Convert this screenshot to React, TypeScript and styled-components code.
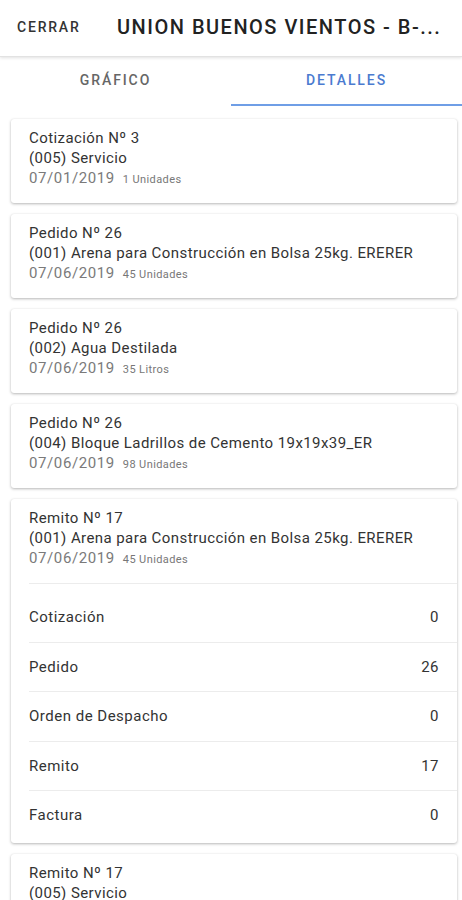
import React from "react";
import styled, { createGlobalStyle } from "styled-components";

const Global = createGlobalStyle`
  html, body { margin: 0; padding: 0; background: #fff; }
  body { font-family: Roboto, "Noto Sans", Arial, sans-serif; -webkit-font-smoothing: antialiased; }
  * { box-sizing: border-box; }
`;

const Page = styled.div`
  width: 462px;
  min-height: 900px;
  background: #fff;
  overflow: hidden;
`;

const Header = styled.header`
  height: 56px;
  display: flex;
  align-items: center;
  padding-left: 17px;
  padding-bottom: 3px;
  background: #fff;
  box-shadow: 0 1px 0 #e2e2e2, 0 2px 3px rgba(0, 0, 0, 0.12);
  position: relative;
  z-index: 1;
`;

const CloseButton = styled.span`
  font-size: 14px;
  font-weight: 500;
  letter-spacing: 1.8px;
  color: #333;
  width: 100px;
`;

const Title = styled.h1`
  margin: 0;
  font-size: 20px;
  font-weight: 500;
  letter-spacing: 1.5px;
  color: #222;
  white-space: nowrap;
`;

const Tabs = styled.nav`
  height: 49px;
  display: grid;
  grid-template-columns: 1fr 1fr;
  margin-top: 1px;
`;

const Tab = styled.div<{ $active?: boolean }>`
  display: flex;
  align-items: center;
  justify-content: center;
  padding-bottom: 2px;
  font-size: 14px;
  font-weight: 500;
  letter-spacing: 1.9px;
  color: ${(p) => (p.$active ? "#4b7bd0" : "#666")};
  border-bottom: 2px solid ${(p) => (p.$active ? "#6f9ee6" : "transparent")};
`;

const List = styled.main`
  display: flex;
  flex-direction: column;
  gap: 11px;
  padding: 13px 5px 0 11px;
`;

const Card = styled.section`
  background: #fff;
  border-radius: 3px;
  box-shadow: 0 1px 3px rgba(0, 0, 0, 0.28), 0 0 1px rgba(0, 0, 0, 0.08);
`;

const CardHead = styled.div`
  padding: 9px 18px 13px;
  font-size: 15px;
  line-height: 20px;
  color: #333;
`;

const Line = styled.div`
  white-space: nowrap;
  letter-spacing: 0.42px;
`;

const Meta = styled.div`
  display: flex;
  align-items: baseline;
  gap: 8px;
`;

const DateText = styled.span`
  font-size: 15px;
  letter-spacing: 0.6px;
  color: #7a7a7a;
`;

const Units = styled.span`
  font-size: 11px;
  letter-spacing: 0.4px;
  color: #777;
`;

const Details = styled.div`
  padding: 8px 0 3px;
  border-top: 1px solid #ececec;
  margin-left: 18px;
`;

const Row = styled.div`
  height: 49.5px;
  display: flex;
  align-items: center;
  justify-content: space-between;
  padding-right: 18px;
  font-size: 15px;
  letter-spacing: 0.5px;
  color: #333;
  & + & {
    border-top: 1px solid #ececec;
  }
`;

type Item = { title: string; product: string; date: string; units: string; details?: [string, string][] };

const items: Item[] = [
  { title: "Cotización Nº 3", product: "(005) Servicio", date: "07/01/2019", units: "1 Unidades" },
  { title: "Pedido Nº 26", product: "(001) Arena para Construcción en Bolsa 25kg. ERERER", date: "07/06/2019", units: "45 Unidades" },
  { title: "Pedido Nº 26", product: "(002) Agua Destilada", date: "07/06/2019", units: "35 Litros" },
  { title: "Pedido Nº 26", product: "(004) Bloque Ladrillos de Cemento 19x19x39_ER", date: "07/06/2019", units: "98 Unidades" },
  {
    title: "Remito Nº 17",
    product: "(001) Arena para Construcción en Bolsa 25kg. ERERER",
    date: "07/06/2019",
    units: "45 Unidades",
    details: [
      ["Cotización", "0"],
      ["Pedido", "26"],
      ["Orden de Despacho", "0"],
      ["Remito", "17"],
      ["Factura", "0"],
    ],
  },
  { title: "Remito Nº 17", product: "(005) Servicio", date: "07/06/2019", units: "1 Unidades" },
];

export default function App() {
  return (
    <Page>
      <Global />
      <Header>
        <CloseButton>CERRAR</CloseButton>
        <Title>UNION BUENOS VIENTOS - B-...</Title>
      </Header>
      <Tabs>
        <Tab>GRÁFICO</Tab>
        <Tab $active>DETALLES</Tab>
      </Tabs>
      <List>
        {items.map((it, i) => (
          <Card key={i}>
            <CardHead>
              <Line>{it.title}</Line>
              <Line>{it.product}</Line>
              <Meta>
                <DateText>{it.date}</DateText>
                <Units>{it.units}</Units>
              </Meta>
            </CardHead>
            {it.details && (
              <Details>
                {it.details.map(([k, v]) => (
                  <Row key={k}>
                    <span>{k}</span>
                    <span>{v}</span>
                  </Row>
                ))}
              </Details>
            )}
          </Card>
        ))}
      </List>
    </Page>
  );
}
